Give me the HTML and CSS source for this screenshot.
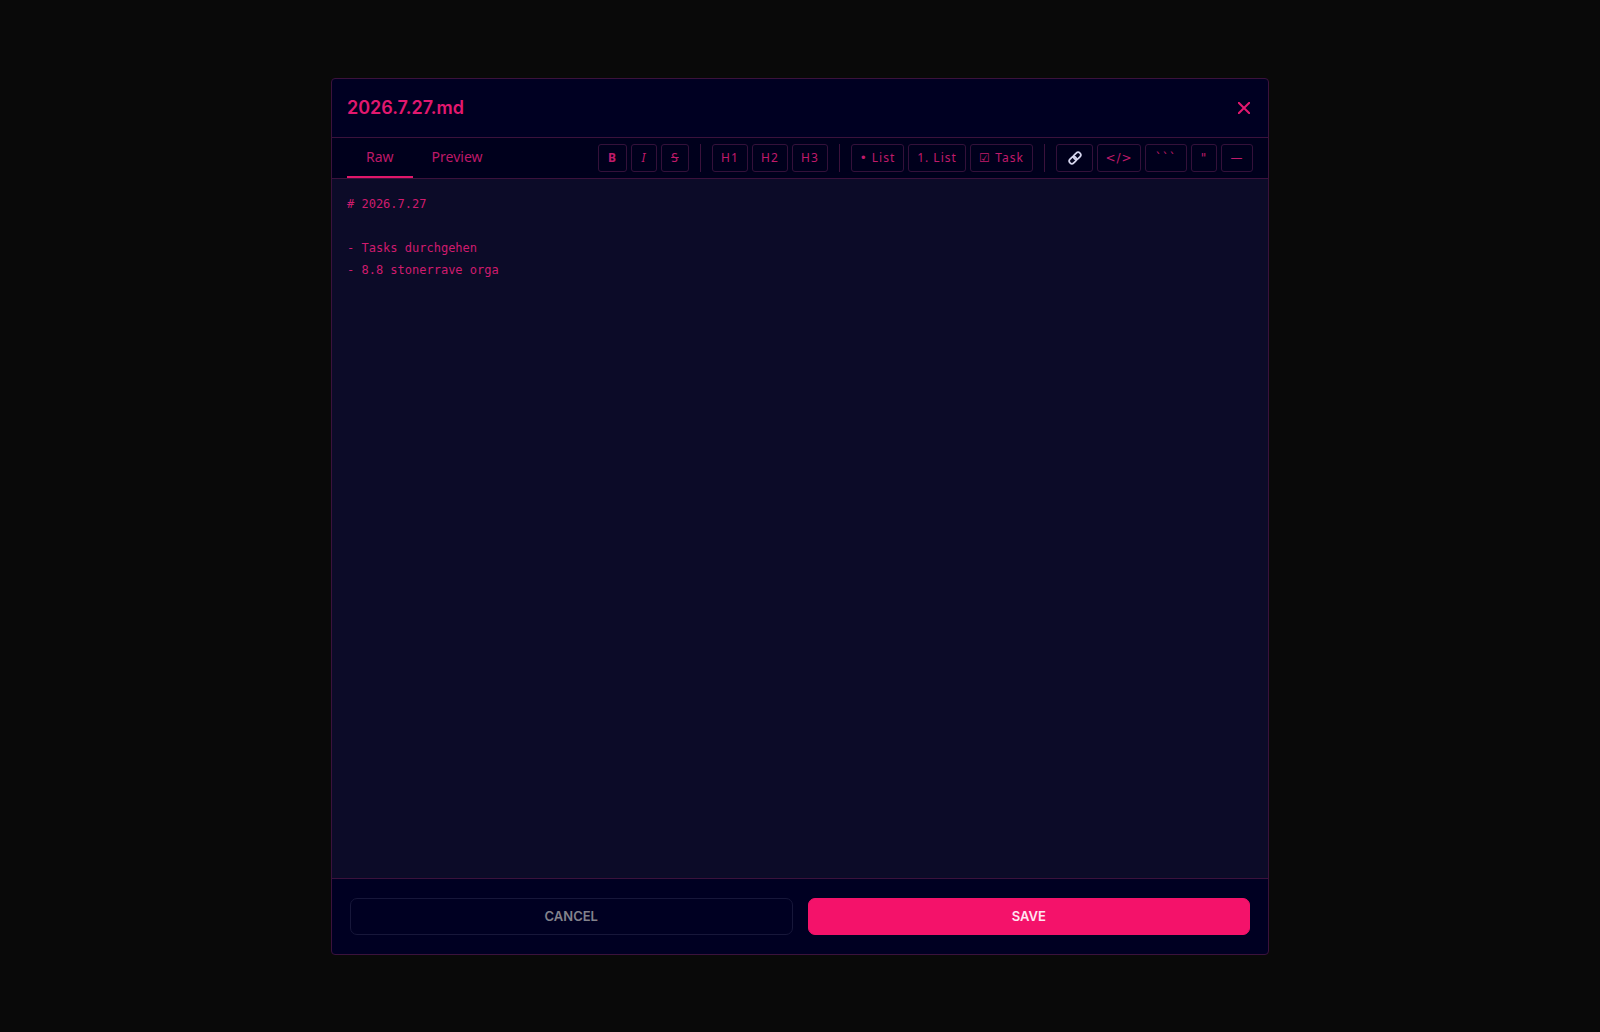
FILE: index.html
```html
<!DOCTYPE html>
<html lang="en">
<head>
<meta charset="utf-8">
<meta name="viewport" content="width=device-width, initial-scale=1">
<title>2026.7.27.md</title>
<link rel="stylesheet" href="styles.css">
</head>
<body>
<main class="modal" role="dialog" aria-labelledby="title">
  <header class="modal-header">
    <h1 class="title" id="title">2026.7.27.md</h1>
    <button class="close" type="button" aria-label="Close">
      <svg width="12" height="12" viewBox="0 0 12 12" fill="none" stroke="currentColor" stroke-width="2"><path d="M0 0l12 12M12 0L0 12"/></svg>
    </button>
  </header>
  <div class="bar">
    <nav class="tabs">
      <button class="tab active" type="button">Raw</button>
      <button class="tab" type="button">Preview</button>
    </nav>
    <div class="tools">
      <button class="tool bold" type="button"><b>B</b></button>
      <button class="tool small" type="button"><i>I</i></button>
      <button class="tool strike" type="button"><s>S</s></button>
      <span class="sep"></span>
      <button class="tool heading" type="button">H1</button>
      <button class="tool heading" type="button">H2</button>
      <button class="tool heading" type="button">H3</button>
      <span class="sep"></span>
      <button class="tool bullets" type="button"><span class="dot">•</span> List</button>
      <button class="tool numbers" type="button">1. List</button>
      <button class="tool task" type="button">☑ Task</button>
      <span class="sep"></span>
      <button class="tool link" type="button" aria-label="Link">
        <svg width="14" height="14" viewBox="0 0 16 16" fill="none" stroke="currentColor" stroke-width="2"><g transform="rotate(-45 8 8)"><rect x="0" y="5" width="9" height="6" rx="3"/><rect x="7" y="5" width="9" height="6" rx="3"/></g></svg>
      </button>
      <button class="tool symbol code" type="button">&lt;/&gt;</button>
      <button class="tool symbol fence" type="button">```</button>
      <button class="tool symbol small" type="button">"</button>
      <button class="tool symbol rule" type="button">—</button>
    </div>
  </div>
  <textarea class="editor" aria-label="Markdown" spellcheck="false"># 2026.7.27

- Tasks durchgehen
- 8.8 stonerrave orga</textarea>
  <footer class="actions">
    <button class="action cancel" type="button">CANCEL</button>
    <button class="action save" type="button">SAVE</button>
  </footer>
</main>
</body>
</html>
```
FILE: styles.css
```css
* { box-sizing: border-box; }

body {
  margin: 0;
  min-height: 100vh;
  display: flex;
  align-items: center;
  justify-content: center;
  background: #090909;
  color: #f41469;
  font-family: "Noto Sans", sans-serif;
}

button {
  margin: 0;
  background: none;
  border: 0;
  color: inherit;
  font-family: inherit;
  cursor: pointer;
}

.modal {
  display: flex;
  flex-direction: column;
  width: 94%;
  max-width: 938px;
  height: calc(100vh - 155px);
  background: #000022;
  border: 1px solid #3b123c;
  border-radius: 4px;
  overflow: hidden;
}

.modal-header {
  display: flex;
  align-items: center;
  justify-content: space-between;
  padding: 14px 14px 14px 15px;
  border-bottom: 1px solid #3b123c;
}

.title {
  margin: 0;
  color: #e2186f;
  font: 600 18px/30px Inter, sans-serif;
}

.close {
  display: flex;
  padding: 4px;
  color: #e2186f;
}

.bar {
  display: flex;
  justify-content: space-between;
  padding: 0 15px;
  background: #00001c;
  border-bottom: 1px solid #3b123c;
}

.tabs { display: flex; }

.tab {
  padding: 0 19px;
  border-bottom: 2px solid transparent;
  color: #bd1968;
  font-size: 14px;
  line-height: 38px;
}

.tab.active { border-color: #e0166a; }

.tools {
  display: flex;
  align-items: center;
  gap: 4px;
}

.tool {
  display: flex;
  align-items: center;
  justify-content: center;
  gap: 4px;
  height: 28px;
  padding: 0;
  border: 1px solid #34113a;
  border-radius: 3px;
  color: #c01b6b;
  font-size: 12px;
  letter-spacing: 1px;
  white-space: nowrap;
}

.bold { width: 29px; }
.small { width: 26px; }
.strike { width: 28px; }
.heading { width: 36px; }
.bullets { width: 53px; }
.numbers { width: 58px; }
.task { width: 63px; }
.link { width: 37px; color: #d5d5ee; }
.code { width: 44px; }
.fence { width: 42px; }
.rule { width: 32px; }

.symbol, .dot { font-family: "DejaVu Sans", sans-serif; }

.sep {
  width: 1px;
  height: 28px;
  margin: 0 7px;
  background: #3b123c;
}

.editor {
  flex: 1;
  display: block;
  width: 100%;
  padding: 14px 15px;
  border: 0;
  outline: 0;
  resize: none;
  background: #0c0b28;
  color: #d01b6e;
  font: 12px/22px "DejaVu Sans Mono", monospace;
}

.actions {
  display: flex;
  gap: 15px;
  padding: 19px 18px;
  border-top: 1px solid #3b123c;
}

.action {
  flex: 1;
  height: 37px;
  border: 1px solid #17173a;
  border-radius: 7px;
  font: 600 13px/20px Inter, sans-serif;
}

.cancel { color: #83838c; }

.save {
  background: #f4126a;
  border-color: #f4126a;
  color: #ffe6f2;
}
```
